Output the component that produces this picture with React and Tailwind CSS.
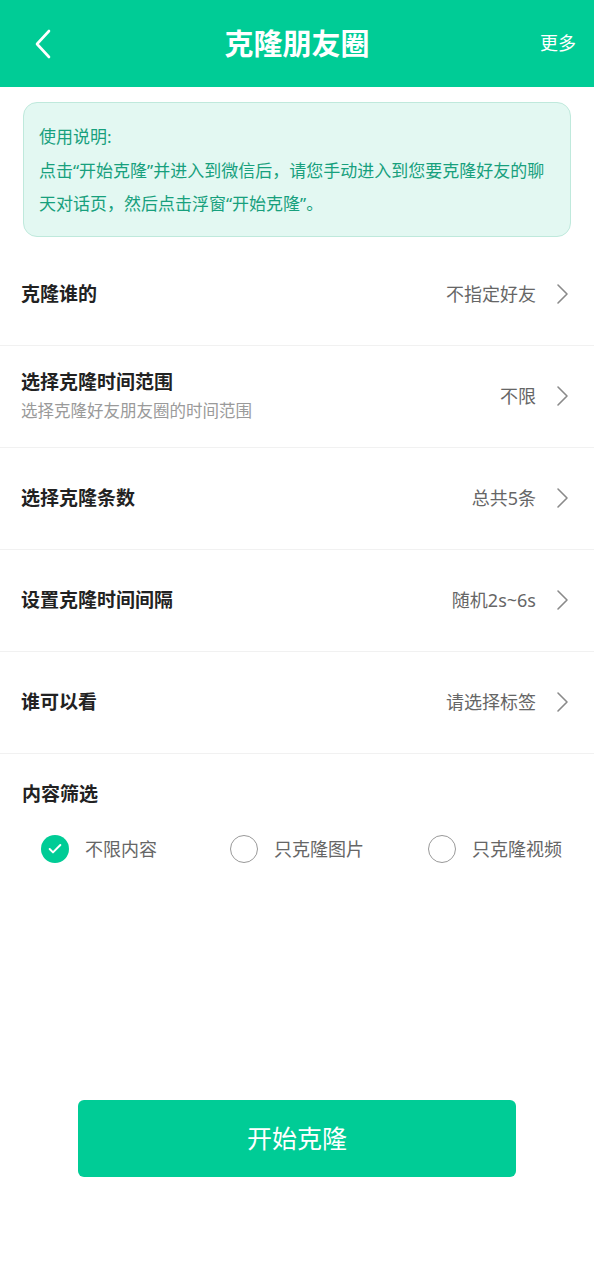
import { Check } from 'lucide-react';
import { useState } from 'react';

const rows = [
    { title: '克隆谁的', value: '不指定好友' },
    { title: '选择克隆时间范围', sub: '选择克隆好友朋友圈的时间范围', value: '不限' },
    { title: '选择克隆条数', value: '总共5条' },
    { title: '设置克隆时间间隔', value: '随机2s~6s' },
    { title: '谁可以看', value: '请选择标签' },
];

const filters = [
    { label: '不限内容', gap: '' },
    { label: '只克隆图片', gap: 'ml-[73px]' },
    { label: '只克隆视频', gap: 'ml-[64px]' },
];

const Arrow = () => (
    <svg width="14" height="22" viewBox="0 0 14 22" fill="none" stroke="#8a8a8a" strokeWidth="1.6" strokeLinecap="round" strokeLinejoin="round">
        <path d="M3 2 L12 11 L3 20" />
    </svg>
);

const App = () => {
    const [filter, setFilter] = useState(0);

    return (
        <div className="min-h-[1280px] bg-white" style={{ fontFamily: '"Noto Sans", "Noto Sans CJK SC", sans-serif' }}>
            {/* header */}
            <div className="h-[87px] bg-[#00cc96] grid grid-cols-[80px_1fr_80px] items-center text-white">
                <svg width="20" height="30" viewBox="0 0 20 30" fill="none" stroke="white" strokeWidth="2.6" strokeLinecap="round" strokeLinejoin="round" className="ml-[33px]">
                    <path d="M16 2 L4 15 L16 28" />
                </svg>
                <h1 className="text-center text-[29px] font-bold">克隆朋友圈</h1>
                <span className="text-right pr-[18px] text-[18px]">更多</span>
            </div>

            {/* usage note */}
            <div className="mx-[23px] mt-[15px] rounded-[14px] border border-[#bfe9dc] bg-[#e3f8f2] px-[15px] pt-[17px] pb-[15px] text-[17px] leading-[33.5px] text-[#17a07d]">
                <p>使用说明:</p>
                <p>点击“开始克隆”并进入到微信后，请您手动进入到您要克隆好友的聊天对话页，然后点击浮窗“开始克隆”。</p>
            </div>

            {/* settings list */}
            <div className="mt-[7px]">
                {rows.map((row, i) => (
                    <div key={i} className="h-[102px] flex items-center justify-between pl-[21px] pr-[25px] border-b border-[#f1f1f1]">
                        <div className="flex flex-col">
                            <span className="text-[19px] font-bold text-[#222]">{row.title}</span>
                            {row.sub && <span className="text-[16.5px] text-[#9a9a9a] mt-[2px]">{row.sub}</span>}
                        </div>
                        <div className="flex items-center gap-[19px]">
                            <span className="text-[18px] text-[#666]">{row.value}</span>
                            <Arrow />
                        </div>
                    </div>
                ))}
            </div>

            {/* content filter */}
            <div className="pl-[22px] pt-[26px]">
                <h2 className="text-[19px] font-bold text-[#222]">内容筛选</h2>
                <div className="flex mt-[27px] pl-[19px]">
                    {filters.map((f, i) => (
                        <button key={f.label} onClick={() => setFilter(i)} className={`flex items-center gap-[16px] ${f.gap}`}>
                            {filter === i ? (
                                <span className="w-[28px] h-[28px] rounded-full bg-[#00cc96] flex items-center justify-center">
                                    <Check size={16} strokeWidth={3} className="text-white" />
                                </span>
                            ) : (
                                <span className="w-[28px] h-[28px] rounded-full border border-[#999]" />
                            )}
                            <span className="text-[18px] text-[#666]">{f.label}</span>
                        </button>
                    ))}
                </div>
            </div>

            {/* start button */}
            <div className="flex justify-center mt-[237px]">
                <button className="w-[438px] h-[77px] rounded-[6px] bg-[#00cc96] text-white text-[25px]">开始克隆</button>
            </div>
        </div>
    );
};

export default App;
